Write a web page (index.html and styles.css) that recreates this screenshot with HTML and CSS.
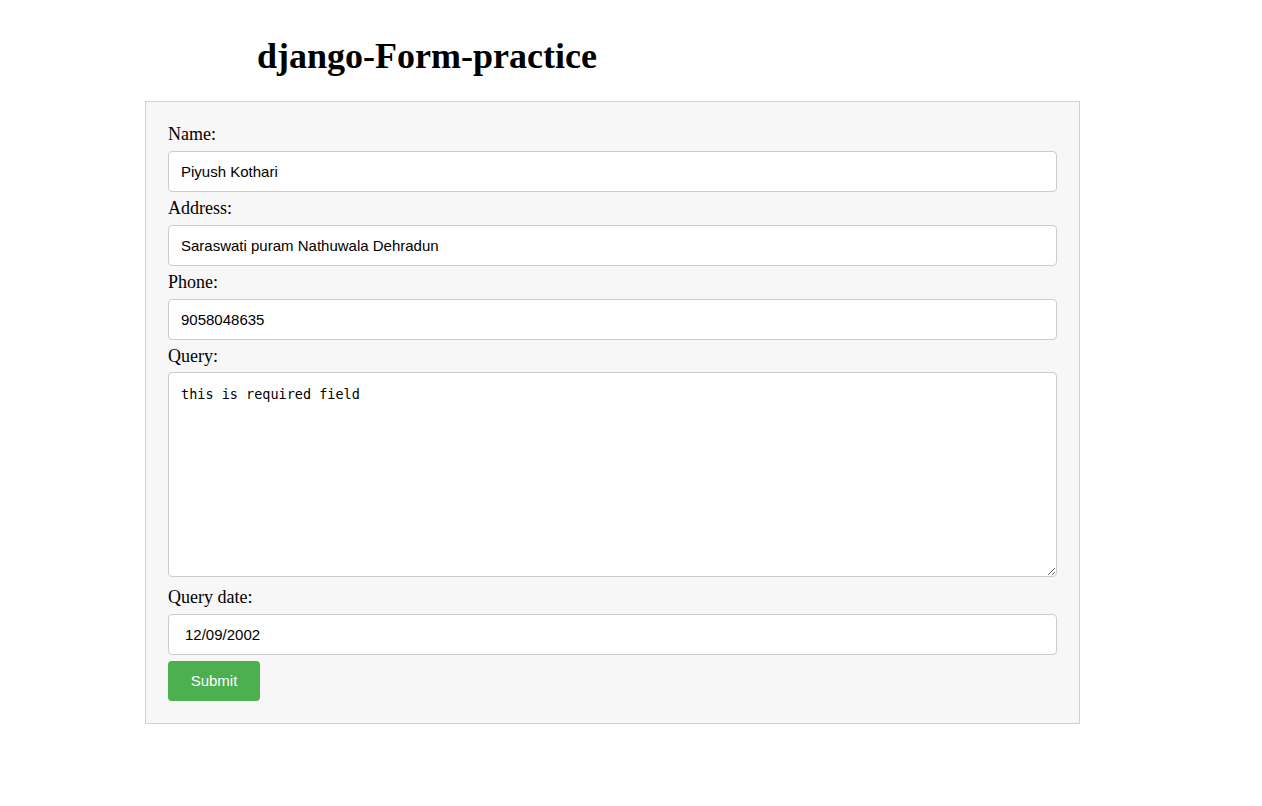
FILE: index.html
```html
<!DOCTYPE html>
<html>
<head>
<meta charset="utf-8">
<title>django-Form-practice</title>
<link rel="stylesheet" href="styles.css">
</head>
<body>
<div class="page">
  <h1 class="title">django-Form-practice</h1>
  <form class="form-box">
    <label class="field-label" for="name">Name:</label>
    <input class="field-input" type="text" id="name" value="Piyush Kothari">
    <label class="field-label" for="address">Address:</label>
    <input class="field-input" type="text" id="address" value="Saraswati puram Nathuwala Dehradun">
    <label class="field-label" for="phone">Phone:</label>
    <input class="field-input" type="text" id="phone" value="9058048635">
    <label class="field-label" for="query">Query:</label>
    <textarea class="field-textarea" id="query">this is required field</textarea>
    <label class="field-label" for="qdate">Query date:</label>
    <input class="field-input date-input" type="text" id="qdate" value="12/09/2002">
    <button class="submit-btn" type="button">Submit</button>
  </form>
</div>
</body>
</html>
```
FILE: styles.css
```css
html, body {
  margin: 0;
  padding: 0;
  background: #ffffff;
}
body {
  font-family: "Liberation Serif", "Times New Roman", serif;
  color: #000;
}
.page {
  width: 935px;
  margin-left: 145px;
  padding-top: 36px;
}
.title {
  font-family: "Liberation Serif", "Times New Roman", serif;
  font-size: 36px;
  font-weight: bold;
  line-height: 41px;
  margin: 0 0 24px 112px;
}
.form-box {
  display: flex;
  flex-direction: column;
  align-items: flex-start;
  box-sizing: border-box;
  width: 935px;
  background: #f7f7f7;
  border: 1px solid #d0d0d0;
  padding: 22px;
}
.field-label {
  display: block;
  font-size: 18px;
  line-height: 21px;
}
.field-input {
  display: block;
  box-sizing: border-box;
  width: 100%;
  height: 41px;
  margin: 6px 0;
  padding: 0 12px;
  border: 1px solid #cccccc;
  border-radius: 4px;
  background: #fff;
  font-family: "Liberation Sans", Arial, sans-serif;
  font-size: 15px;
  color: #000;
  outline: none;
}
.date-input {
  padding-left: 16px;
}
.field-textarea {
  display: block;
  box-sizing: border-box;
  width: 100%;
  height: 205px;
  margin: 5px 0 10px;
  padding: 13px 12px 12px;
  border: 1px solid #cccccc;
  border-radius: 4px;
  background: #fff;
  font-family: "DejaVu Sans Mono", "Liberation Mono", monospace;
  font-size: 13.5px;
  color: #000;
  resize: vertical;
  outline: none;
}
.submit-btn {
  box-sizing: border-box;
  width: 92px;
  height: 40px;
  margin: 0;
  padding: 0 0 1px;
  border: none;
  border-radius: 4px;
  background: #4caf50;
  color: #fff;
  font-family: "Liberation Sans", Arial, sans-serif;
  font-size: 15px;
  cursor: pointer;
}
```
